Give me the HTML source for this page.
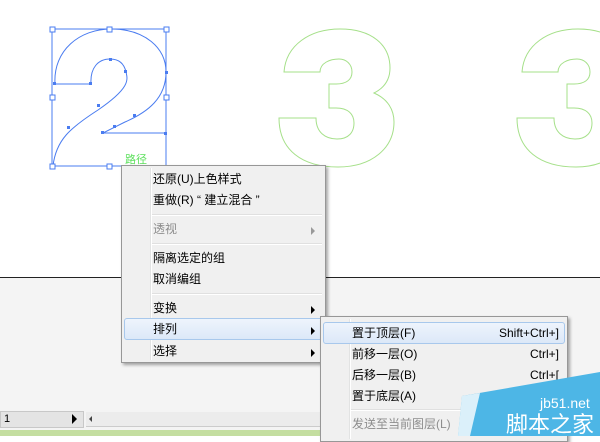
<!DOCTYPE html>
<html><head><meta charset="utf-8"><style>
body{margin:0;width:600px;height:436px;overflow:hidden;background:#fff;font-family:"Liberation Sans","Noto Sans CJK SC",sans-serif;position:relative}
.menu{position:absolute;background:#f0f0f0;border:1px solid #979797;box-shadow:2px 2px 3px rgba(0,0,0,.35);font-size:12px;color:#000}
.menu .g{position:absolute;left:28px;top:2px;bottom:2px;border-left:1px solid #e2e3e3;border-right:1px solid #fff}
.it{position:absolute;left:31px;height:20px;line-height:20px}
.sep{position:absolute;left:30px;right:3px;height:1px;background:#e0e0e0;border-bottom:1px solid #fff}
.hl{position:absolute;left:2px;right:2px;height:20px;border:1px solid #a8c8ec;border-radius:3px;background:linear-gradient(#eef4fc,#dce8f8)}
.ar{position:absolute;right:10px;width:0;height:0;border-top:4px solid transparent;border-bottom:4px solid transparent;border-left:4px solid #000}
.dis{color:#8d8d8d}
.sc{position:absolute;right:8px;height:20px;line-height:20px}
</style></head><body>
<div style="position:absolute;left:0;top:277px;width:600px;height:1px;background:#222"></div>
<div style="position:absolute;left:0;top:278px;width:600px;height:158px;background:#f4f4f4"></div>
<div style="position:absolute;left:0;top:411px;width:82px;height:15px;background:#e4e4e4;border:1px solid #c8c8c8;font-size:11px;line-height:15px;color:#000">&nbsp;1</div>
<div style="position:absolute;left:72px;top:414px;border-top:5px solid transparent;border-bottom:5px solid transparent;border-left:5px solid #000"></div>
<div style="position:absolute;left:86px;top:412px;width:520px;height:14px;background:#ececec;border-bottom:1px solid #ccc"></div>
<div style="position:absolute;left:89px;top:416px;border-top:3px solid transparent;border-bottom:3px solid transparent;border-right:3px solid #444"></div>
<div style="position:absolute;left:0;top:430px;width:600px;height:6px;background:#c4dea0"></div>
<svg width="600" height="436" style="position:absolute;left:0;top:0" fill="none">
<g stroke="#a6e08a" stroke-width="1">
<path d="M284,72 C286,45 310,29 340,29 C372,29 390,45 390,68 C390,80 384,88 374,93 C388,99 394,110 394,122 C394,148 372,167 338,167 C302,167 279,150 279,118 L316,118 C316,132 325,139 337,139 C349,139 354,132 354,123 C354,114 348,108 336,108 L329,108 L329,84 L336,84 C346,84 352,80 352,72 C352,64 346,59 339,59 C330,59 320,63 320,72 Z"/>
<path d="M522,72 C524,45 548,29 578,29 C610,29 628,45 628,68 L628,120 C628,148 610,167 576,167 C540,167 517,150 517,118 L554,118 C554,132 563,139 575,139 C587,139 592,132 592,123 C592,114 586,108 574,108 L567,108 L567,84 L574,84 C584,84 590,80 590,72 C590,64 584,59 577,59 C568,59 558,63 558,72 Z"/>
</g>
<g stroke="#4a7cf0" stroke-width="1">
<rect x="52" y="29" width="114" height="137"/>
<path d="M53,166 C56,140 70,128 98,110 C130,88 128,80 126,72 C124,63 118,59 110,59 C98,59 90,68 91,84 L55,84 C53,50 80,29 111,29 C145,29 166,48 166,72 C166,98 148,112 125,122 L103,133 L166,133 L166,166"/>
</g>
<g fill="#4a7cf0"><rect x="53" y="82" width="3" height="3"/><rect x="89" y="82" width="3" height="3"/><rect x="109" y="58" width="3" height="3"/><rect x="124" y="70" width="3" height="3"/><rect x="97" y="104" width="3" height="3"/><rect x="67" y="126" width="3" height="3"/><rect x="113" y="125" width="3" height="3"/><rect x="133" y="114" width="3" height="3"/><rect x="101" y="131" width="3" height="3"/><rect x="164" y="132" width="3" height="3"/><rect x="165" y="71" width="3" height="3"/></g>
<g fill="#fff" stroke="#4a7cf0"><rect x="50" y="27" width="5" height="5"/><rect x="107" y="27" width="5" height="5"/><rect x="164" y="27" width="5" height="5"/><rect x="50" y="95" width="5" height="5"/><rect x="164" y="95" width="5" height="5"/><rect x="50" y="164" width="5" height="5"/><rect x="107" y="164" width="5" height="5"/></g>
<text x="125" y="163" font-size="11" fill="#5ce05c" font-family="Noto Sans CJK SC">路径</text>
</svg>
<div class="menu" style="left:121px;top:165px;width:203px;height:196px">
<div class="g"></div>
<div class="it" style="top:3px">还原(U)上色样式</div>
<div class="it" style="top:24px">重做(R) “ 建立混合 ”</div>
<div class="sep" style="top:48px"></div>
<div class="it dis" style="top:53px">透视</div><div class="ar" style="top:61px;border-left-color:#999"></div>
<div class="sep" style="top:77px"></div>
<div class="it" style="top:82px">隔离选定的组</div>
<div class="it" style="top:103px">取消编组</div>
<div class="sep" style="top:127px"></div>
<div class="it" style="top:132px">变换</div><div class="ar" style="top:140px"></div>
<div class="hl" style="top:152px"></div>
<div class="it" style="top:153px">排列</div><div class="ar" style="top:161px"></div>
<div class="it" style="top:175px">选择</div><div class="ar" style="top:183px"></div>
</div>
<div class="menu" style="left:320px;top:316px;width:246px;height:124px">
<div class="g"></div>
<div class="hl" style="top:5px"></div>
<div class="it" style="top:6px">置于顶层(F)</div><div class="sc" style="top:6px">Shift+Ctrl+]</div>
<div class="it" style="top:27px">前移一层(O)</div><div class="sc" style="top:27px">Ctrl+]</div>
<div class="it" style="top:48px">后移一层(B)</div><div class="sc" style="top:48px">Ctrl+[</div>
<div class="it" style="top:69px">置于底层(A)</div><div class="sc" style="top:69px">Shift+</div>
<div class="sep" style="top:92px"></div>
<div class="it dis" style="top:97px">发送至当前图层(L)</div>
</div>
<svg width="600" height="436" style="position:absolute;left:0;top:0">
<path d="M462,396 L600,372 L600,436 L458,436 Z" fill="#4db6e6"/>
<path d="M462,396 L480,393 L470,436 L458,436 Z" fill="#fff" opacity=".8"/>
<text x="540" y="408" font-size="14" fill="#fff" font-family="Liberation Sans">jb51.net</text>
<text x="506" y="432" font-size="22" fill="#fff" font-family="Noto Sans CJK SC">脚本之家</text>
</svg>
</body></html>
